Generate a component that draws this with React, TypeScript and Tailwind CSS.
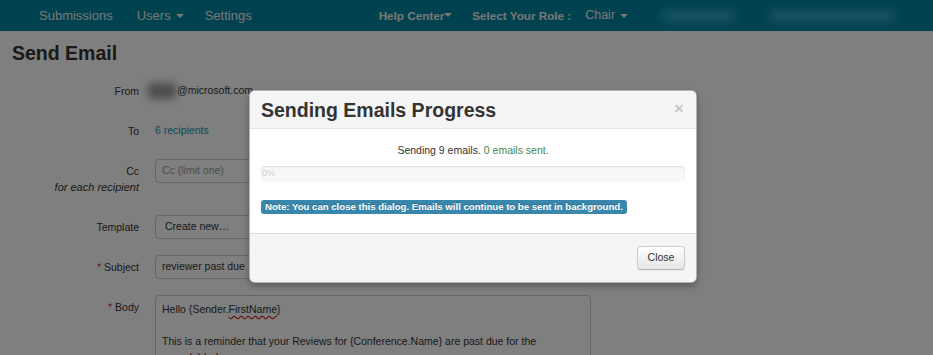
import React from "react";

const Caret = () => (
  <span className="ml-[5px] inline-block h-0 w-0 border-x-[4px] border-t-[4px] border-x-transparent border-t-[#eeeeee] align-middle" />
);

const FieldRow: React.FC<{ label: React.ReactNode; required?: boolean; children: React.ReactNode; tall?: boolean }> = ({
  label,
  required,
  children,
  tall,
}) => (
  <div className="mb-4 grid grid-cols-[127px_1fr] gap-x-4">
    <div className={`text-right leading-[16px] text-[#333] ${tall ? "pt-1 pb-1" : "pt-1"}`}>
      {required && <span className="mr-[3px] text-[#b94a48]">*</span>}
      {label}
    </div>
    <div>{children}</div>
  </div>
);

export default function App() {
  return (
    <div className="relative h-[355px] w-[933px] overflow-hidden bg-white font-['Liberation_Sans',Arial,sans-serif] text-[10.5px] text-[#333]">
      {/* Top navbar */}
      <nav className="flex h-[31px] items-center bg-[#00849f] text-[13px] text-[#eeeeee]">
        <div className="flex items-center pl-[27px]">
          <span className="px-3">Submissions</span>
          <span className="flex items-center px-3">
            Users <Caret />
          </span>
          <span className="pl-[9px] pr-3">Settings</span>
        </div>
        <div className="ml-[115px] flex items-center text-[11.7px]">
          <span className="flex items-center font-bold">
            Help Center
            <span className="inline-block h-0 w-0 border-x-[4px] border-t-[4px] border-x-transparent border-t-[#eeeeee]" />
          </span>
          <span className="ml-[20px] font-bold">Select Your Role :</span>
          <span className="ml-[14px] flex items-center text-[12.5px]">
            Chair <Caret />
          </span>
          <div className="ml-[32px] h-[14px] w-[76px] rounded-full bg-[#2aa2c0] blur-[4px]" />
          <div className="ml-[33px] h-[14px] w-[127px] rounded-full bg-[#2aa2c0] blur-[4px]" />
        </div>
      </nav>

      {/* Page content */}
      <main className="px-3">
        <h1 className="mt-[10px] text-[19.5px] font-bold leading-[24px] text-[#333]">Send Email</h1>
        <div className="mt-[14px]">
          <FieldRow label="From">
            <div className="flex h-6 items-center">
              <span className="-ml-[7px] mr-[1px] h-[16px] w-[28px] bg-[#999] blur-[4px]" />
              <span>@microsoft.com</span>
            </div>
          </FieldRow>
          <FieldRow label="To">
            <div className="flex h-6 items-center text-[#1f93b2]">6 recipients</div>
          </FieldRow>
          <FieldRow
            tall
            label={
              <>
                Cc
                <br />
                <i className="text-[11px]">for each recipient</i>
              </>
            }
          >
            <div className="flex h-6 w-[435px] items-center rounded-[4px] border border-[#cccccc] px-[6px] text-[#999]">
              Cc (limit one)
            </div>
          </FieldRow>
          <FieldRow label="Template">
            <div className="flex h-6 w-[435px] items-center rounded-[4px] border border-[#cccccc] px-[9px] text-[#333]">
              Create new…
            </div>
          </FieldRow>
          <FieldRow label="Subject" required>
            <div className="flex h-6 w-[435px] items-center rounded-[4px] border border-[#cccccc] px-[6px] text-[#333]">
              reviewer past due
            </div>
          </FieldRow>
          <FieldRow label="Body" required>
            <div className="h-[120px] w-[436px] rounded-[4px] border border-[#cccccc] px-[6px] pt-[5px] leading-[16px] text-[#333]">
              <div>
                Hello {"{"}Sender.
                <span className="underline decoration-[#cc0000] decoration-wavy underline-offset-2">FirstName</span>
                {"}"}
              </div>
              <div className="h-4" />
              <div>This is a reminder that your Reviews for {"{"}Conference.Name{"}"} are past due for the</div>
              <div>paper(s) below:</div>
            </div>
          </FieldRow>
        </div>
      </main>

      {/* Backdrop */}
      <div className="absolute inset-0 bg-black/50" />

      {/* Modal dialog */}
      <div className="absolute left-[249px] top-[90px] w-[448px] overflow-hidden rounded-[6px] border border-black/30 bg-white shadow-[0_3px_7px_rgba(0,0,0,0.3)]">
        <div className="flex h-[38px] items-center justify-between border-b border-[#e5e5e5] bg-[#f5f5f5] pl-[11px] pr-[12px]">
          <h3 className="text-[19.5px] font-bold leading-[24px] text-[#333]">Sending Emails Progress</h3>
          <span className="-mt-[3px] text-[17px] font-bold leading-none text-black/20">×</span>
        </div>
        <div className="px-[11px] pb-[18px] pt-[14px]">
          <p className="text-center leading-[14px] text-[#333]">
            Sending 9 emails. <span className="text-[#468847]">0 emails sent.</span>
          </p>
          <div className="mt-[9px] flex h-[16px] items-center rounded-[4px] bg-gradient-to-b from-[#f5f5f5] to-[#f9f9f9] shadow-[inset_0_1px_2px_rgba(0,0,0,0.1)]">
            <span className="pl-[1px] text-[9px] text-[#cccccc]">0%</span>
          </div>
          <div className="mt-[17px]">
            <span className="inline-block rounded-[3px] bg-[#3a87ad] px-[4px] py-[1px] text-[9.6px] font-bold leading-[12px] text-white [text-shadow:0_-1px_0_rgba(0,0,0,0.25)]">
              Note: You can close this dialog. Emails will continue to be sent in background.
            </span>
          </div>
        </div>
        <div className="flex justify-end border-t border-[#dddddd] bg-[#f5f5f5] px-[11px] py-[12px]">
          <button className="h-6 w-[48px] rounded-[4px] border border-[#cccccc] border-b-[#b3b3b3] bg-gradient-to-b from-white to-[#e6e6e6] text-[10.5px] text-[#333] shadow-[inset_0_1px_0_rgba(255,255,255,0.2),0_1px_2px_rgba(0,0,0,0.05)]">
            Close
          </button>
        </div>
      </div>
    </div>
  );
}
